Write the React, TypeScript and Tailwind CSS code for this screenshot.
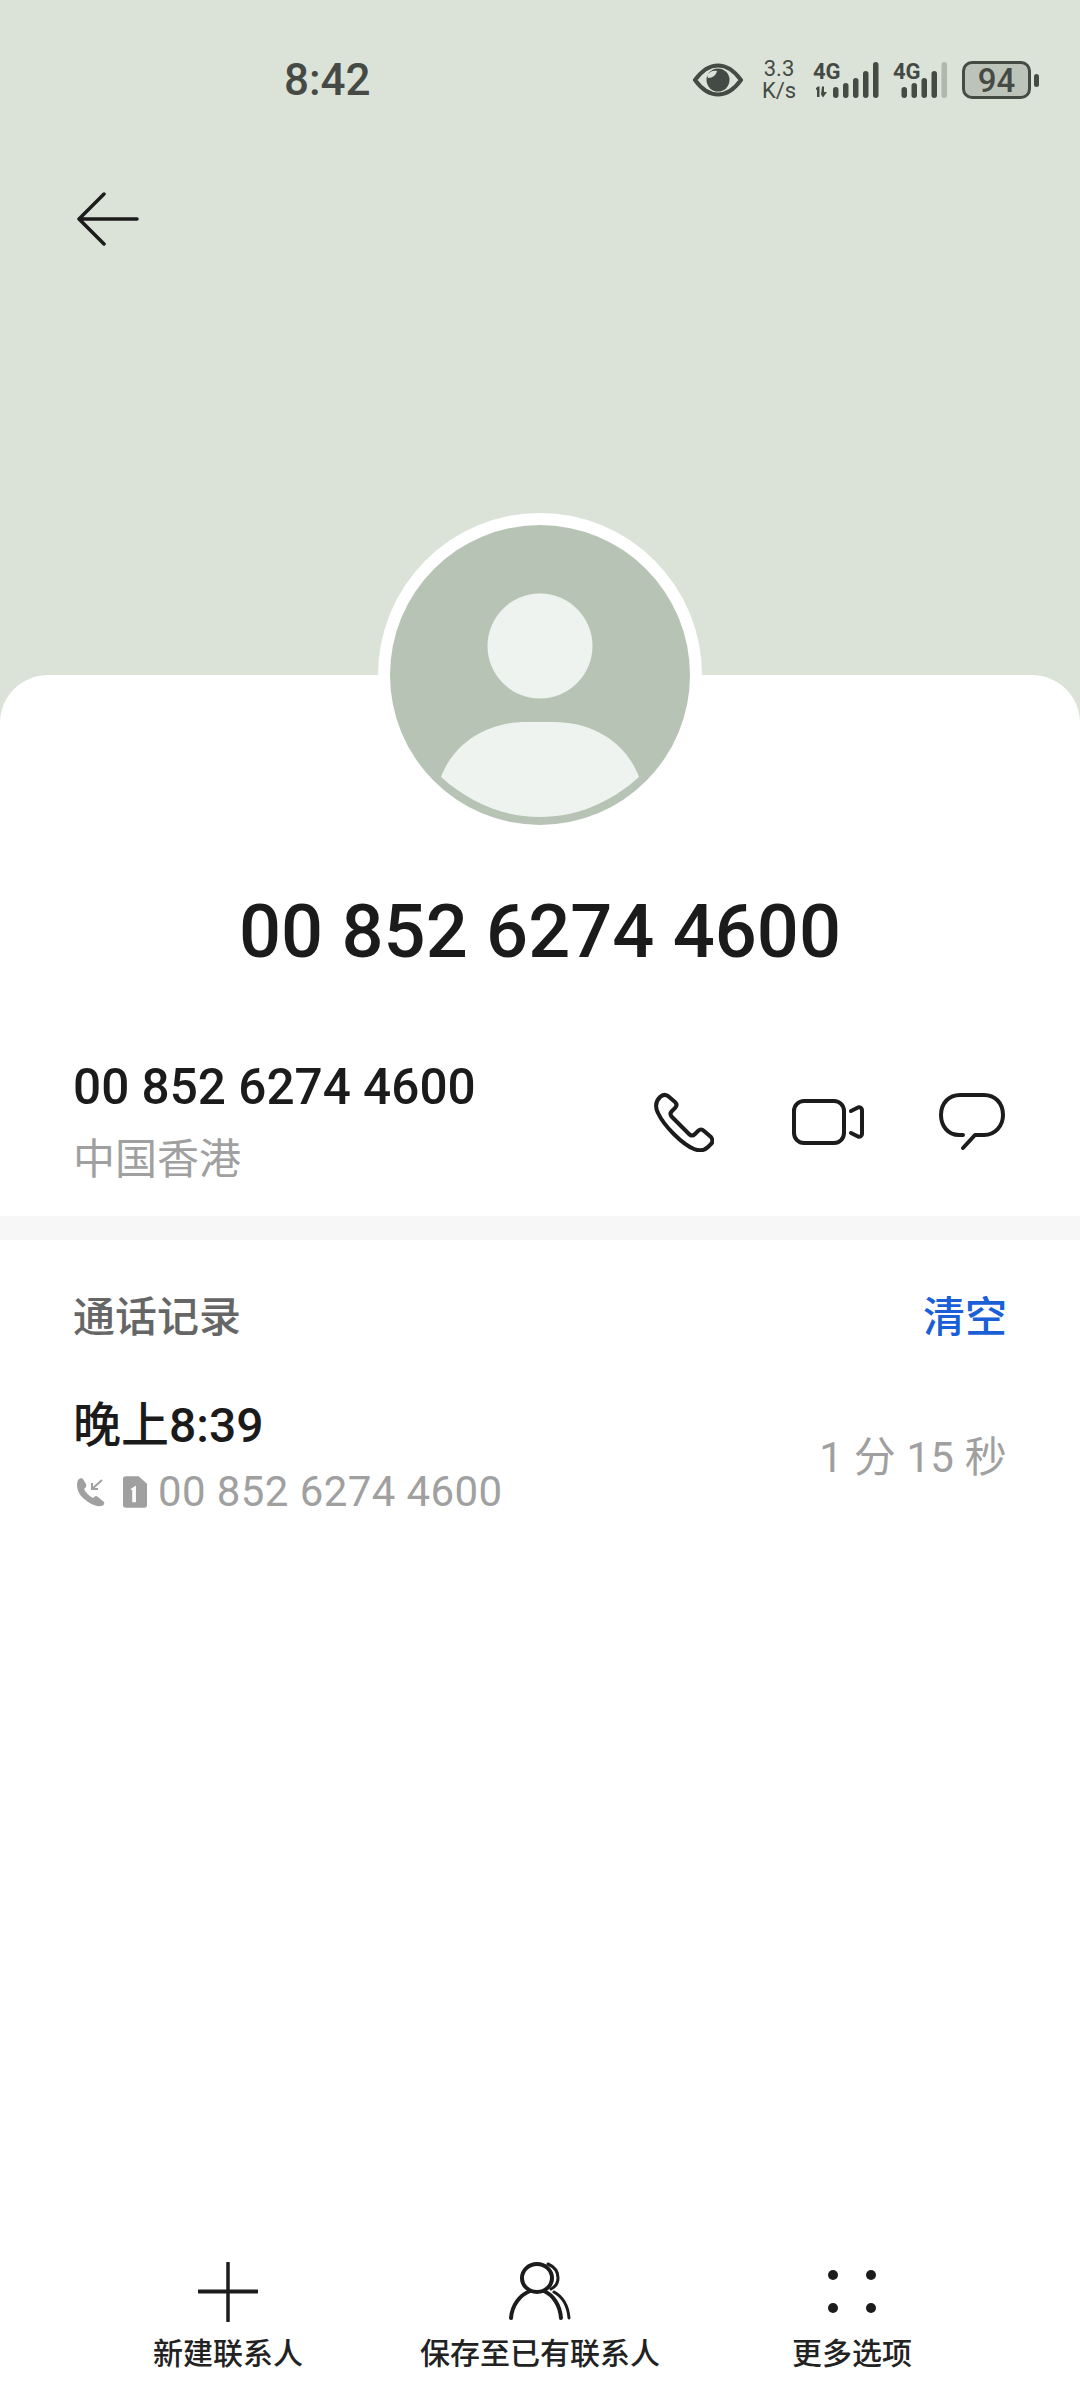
const font = { fontFamily: '"Roboto","Noto Sans CJK SC",sans-serif' };

function Bars({ x, last }: { x: number; last: string }) {
  return (
    <>
      <rect x={x} y="25" width="5.500" height="11" rx="2.700" />
      <rect x={x + 10} y="21" width="5.500" height="15" rx="2.700" />
      <rect x={x + 20} y="16" width="5.500" height="20" rx="2.700" />
      <rect x={x + 30} y="9" width="5.500" height="27" rx="2.700" />
      <rect x={x + 40} y="0" width="5.500" height="36" rx="2.700" fill={last} />
    </>
  );
}

function Status() {
  return (
    <div className="flex h-[160px] items-center">
      <div className="ml-[284px] w-[90px] text-[44px] font-medium leading-none text-[#454a45]">8:42</div>
      <div className="ml-[319px] flex h-[40px] items-center">
        <svg width="50" height="34" viewBox="0 0 50 34" className="text-[#454a45]">
          <path d="M2 17C10 6 17 2.500 25 2.500S40 6 48 17C40 28 33 31.500 25 31.500S10 28 2 17Z" fill="none" stroke="currentColor" strokeWidth="4" />
          <circle cx="25" cy="17" r="11.500" fill="currentColor" />
          <path d="M14 12C17 8 21 7 24 8C23 12 20 15 15 15Z" fill="#dbe3d8" />
        </svg>
        <div className="ml-[17px] flex w-[38px] flex-col items-center text-[22px] leading-[22px] text-[#454a45]">
          <span>3.3</span>
          <span>K/s</span>
        </div>
        <svg width="66" height="38" viewBox="0 0 66 38" className="ml-[15px] overflow-visible" fill="#454a45">
          <text x="0" y="18" fontSize="22" fontWeight="700" fontFamily="Roboto">4G</text>
          <path d="M3 27L5 25.500H6.500V36H4V28.500L3 29ZM9 25.500H11V31H14L10 36.500L8 33.500Z" />
          <g transform="translate(0 1)">
            <Bars x={20} last="#454a45" />
          </g>
        </svg>
        <svg width="54" height="38" viewBox="0 0 54 38" className="ml-[14px] overflow-visible" fill="#454a45">
          <text x="0" y="18" fontSize="22" fontWeight="700" fontFamily="Roboto">4G</text>
          <g transform="translate(0 1)">
            <Bars x={8.500} last="#b0b8ae" />
          </g>
        </svg>
        <div className="ml-[15px] flex h-[38px] w-[69px] items-center justify-center rounded-[10px] border-[3px] border-[#454a45] bg-[#bcc4ba] text-[33px] font-medium leading-none text-[#454a45]">94</div>
        <div className="ml-[3px] h-[13px] w-[5px] rounded-full bg-[#454a45]" />
      </div>
    </div>
  );
}

export default function App() {
  return (
    <div style={font} className="flex h-[2400px] w-[1080px] flex-col overflow-hidden bg-white">
      <div className="h-[720px] bg-[#dbe3d8]">
        <Status />
        <svg width="62" height="54" viewBox="0 0 62 54" className="ml-[77px] mt-[32px]" fill="none" stroke="#1c1c1c" strokeWidth="3.500" strokeLinecap="round" strokeLinejoin="round">
          <path d="M2 27H60M27 2L2 27L27 52" />
        </svg>
      </div>
      <div className="relative mt-[-45px] flex flex-1 flex-col rounded-t-[48px] bg-white">
        <div className="absolute left-[378px] top-[-162px] flex h-[324px] w-[324px] items-center justify-center rounded-full bg-white">
          <svg width="300" height="300" viewBox="0 0 300 300">
            <circle cx="150" cy="150" r="150" fill="#b7c4b5" />
            <circle cx="150" cy="121" r="52.500" fill="#eff3ef" />
            <path d="M51 252C65 215 100 197 136 197H164C200 197 235 215 249 252C220 278 186 292 150 292C114 292 80 278 51 252Z" fill="#eff3ef" />
          </svg>
        </div>
        <div className="mt-[209px] text-center text-[74px] font-medium leading-[96px] text-[#1b1b1b]">00 852 6274 4600</div>

        <div className="mt-[74px] flex h-[136px] items-center justify-between pl-[73px] pr-[75px]">
          <div>
            <div className="text-[49.500px] font-medium leading-[60px] text-[#1b1b1b]">00 852 6274 4600</div>
            <div className="mt-[15px] text-[42px] leading-[56px] text-[#a0a0a0]">中国香港</div>
          </div>
          <div className="flex items-center">
            <svg width="60" height="60" viewBox="0 0 60 60" className="mr-[78px]" fill="none" stroke="#1c1c1c" strokeWidth="4" strokeLinejoin="round" strokeLinecap="round">
              <path d="M6 5C8 3 11 2 14 4L21 10C23 12 23 14 21 16L18 19C16 21 16 23 18 25L35 42C37 44 39 44 41 42L44 39C46 37 48 37 50 39L57 45C59 48 59 50 57 52L54 55C50 59 45 59 40 57C28 52 10 34 4 21C1 15 1 10 6 5Z" />
            </svg>
            <svg width="72" height="46" viewBox="0 0 72 46" className="mr-[75px]" fill="none" stroke="#1c1c1c" strokeWidth="4" strokeLinejoin="round" strokeLinecap="round">
              <rect x="2" y="2" width="50" height="42" rx="10" />
              <path d="M59 12L66 8.500C68 8 70 9 70 11V35C70 37 68 38 66 37.500L59 34" />
            </svg>
            <svg width="66" height="58" viewBox="0 0 66 58" fill="none" stroke="#1c1c1c" strokeWidth="4" strokeLinejoin="round" strokeLinecap="round">
              <path d="M24 42H20C9 42 2 33 2 22C2 10 10 2 21 2H45C56 2 64 10 64 22C64 33 56 42 45 42H36L24 55" />
            </svg>
          </div>
        </div>

        <div className="mt-[26px] h-[24px] bg-[#f7f7f7]" />

        <div className="mt-[50px] flex items-center justify-between pl-[73px] pr-[73px] text-[42px] leading-[56px]">
          <span className="font-medium text-[#666666]">通话记录</span>
          <span className="font-medium text-[#1a5fd8]">清空</span>
        </div>

        <div className="mt-[50px] flex items-center justify-between pl-[73px] pr-[73px]">
          <div>
            <div className="text-[48px] font-medium leading-[60px] text-[#1b1b1b]">晚上8:39</div>
            <div className="mt-[8px] flex h-[56px] items-center">
              <svg width="30" height="30" viewBox="0 0 30 30" className="ml-[2px]" fill="#a0a0a0">
                <path d="M3 3C5 1 7 1 8 2L11 7C12 9 11 10 9 12C11 16 14 19 18 21C20 19 21 18 23 20L29 25C30 27 28 29 26 29C20 30 12 25 7 20C2 15 1 7 3 3Z" />
                <path d="M27 3L17 12M17 6V12H23" fill="none" stroke="#a0a0a0" strokeWidth="2" />
              </svg>
              <svg width="24" height="32" viewBox="0 0 26 34" className="ml-[18px]">
                <path d="M3 0H17L26 8V31C26 33 25 34 23 34H3C1 34 0 33 0 31V3C0 1 1 0 3 0Z" fill="#a0a0a0" />
                <path d="M8 14L14 10V28H10V15Z" fill="#fff" />
              </svg>
              <span className="ml-[11px] text-[42px] leading-[56px] tracking-[0.4px] text-[#a0a0a0]">00 852 6274 4600</span>
            </div>
          </div>
          <span className="text-[42px] leading-[56px] tracking-[0.2px] text-[#a0a0a0]">1 分 15 秒</span>
        </div>

        <div className="mt-auto flex h-[138px] justify-center">
          <div className="flex w-[312px] flex-col items-center">
            <svg width="60" height="60" viewBox="0 0 60 60" fill="none" stroke="#1c1c1c" strokeLinecap="round">
              <path d="M30 1V59" strokeWidth="3.500" />
              <path d="M1 29.500H59" strokeWidth="4" />
            </svg>
            <span className="mt-[12px] text-[30px] font-medium leading-[40px] text-[#222222]">新建联系人</span>
          </div>
          <div className="flex w-[312px] flex-col items-center">
            <svg width="62" height="60" viewBox="0 0 62 60" fill="none" stroke="#1c1c1c" strokeWidth="4" strokeLinecap="round">
              <ellipse cx="28" cy="16" rx="15" ry="14" />
              <path d="M2 56C3 43 11 33 21 29M35 29C44 33 51 43 52 56" />
              <path d="M39 2C46 5 49 10 49 16C49 21 46 25 42 27M45 30C54 35 59 44 60 56" strokeWidth="3" />
            </svg>
            <span className="mt-[12px] text-[30px] font-medium leading-[40px] text-[#222222]">保存至已有联系人</span>
          </div>
          <div className="flex w-[312px] flex-col items-center">
            <svg width="60" height="60" viewBox="0 0 60 60" fill="#1c1c1c">
              <circle cx="11" cy="13" r="5" />
              <circle cx="49" cy="13" r="5" />
              <circle cx="11" cy="46" r="5" />
              <circle cx="49" cy="46" r="5" />
            </svg>
            <span className="mt-[12px] text-[30px] font-medium leading-[40px] text-[#222222]">更多选项</span>
          </div>
        </div>
      </div>
    </div>
  );
}
